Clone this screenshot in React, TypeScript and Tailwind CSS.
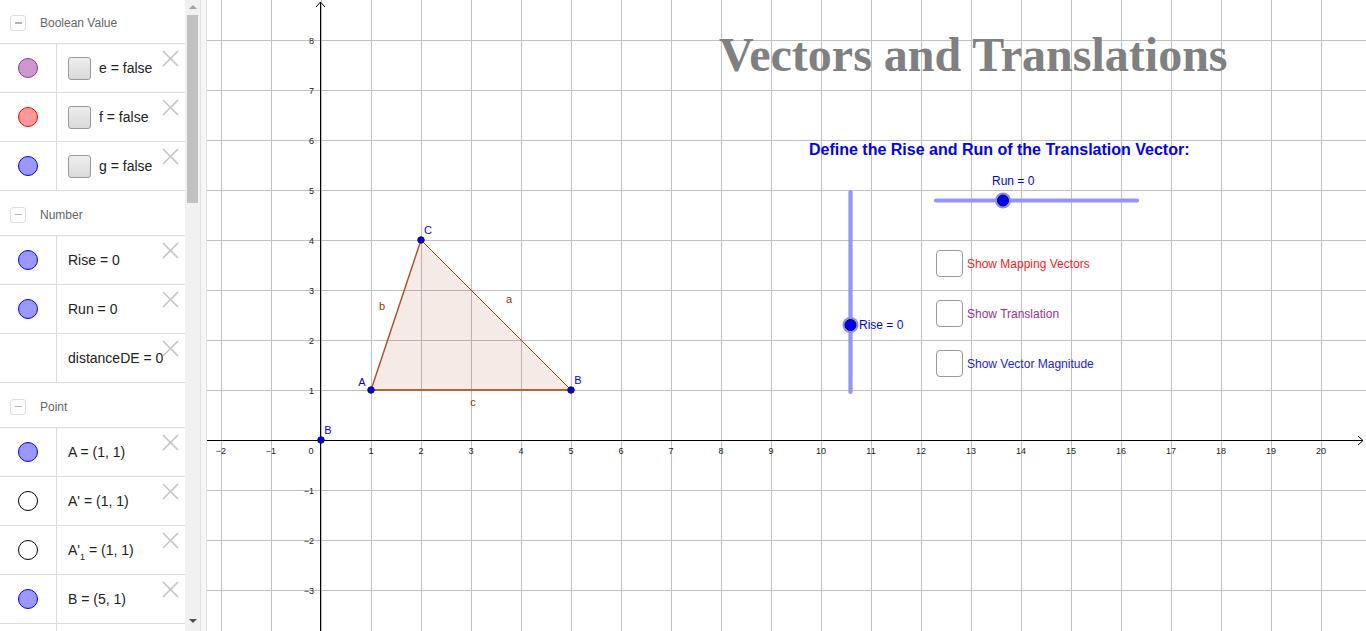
import React from "react";

type Item = {
  color?: { fill: string; stroke: string } | null;
  check?: boolean;
  label: React.ReactNode;
};

const purple = { fill: "#cc99cc", stroke: "#993399" };
const red = { fill: "#ff9999", stroke: "#ff0000" };
const blue = { fill: "#9999ff", stroke: "#0000ff" };
const empty = { fill: "#ffffff", stroke: "#000000" };

const groups: { title: string; first?: boolean; items: Item[] }[] = [
  {
    title: "Boolean Value",
    first: true,
    items: [
      { color: purple, check: true, label: "e = false" },
      { color: red, check: true, label: "f = false" },
      { color: blue, check: true, label: "g = false" },
    ],
  },
  {
    title: "Number",
    items: [
      { color: blue, label: "Rise = 0" },
      { color: blue, label: "Run = 0" },
      { color: null, label: "distanceDE = 0" },
    ],
  },
  {
    title: "Point",
    items: [
      { color: blue, label: "A = (1, 1)" },
      { color: empty, label: "A' = (1, 1)" },
      {
        color: empty,
        label: (
          <>
            A'<sub className="text-[9px] align-[-3px]">1</sub> = (1, 1)
          </>
        ),
      },
      { color: blue, label: "B = (5, 1)" },
    ],
  },
];

function CloseX() {
  return (
    <svg width="17" height="17" viewBox="0 0 17 17" className="absolute top-[6px] right-[6px]">
      <line x1="1" y1="1" x2="16" y2="16" stroke="#c4c4c4" strokeWidth="1.6" />
      <line x1="16" y1="1" x2="1" y2="16" stroke="#c4c4c4" strokeWidth="1.6" />
    </svg>
  );
}

function Row({ item }: { item: Item }) {
  return (
    <div className="relative flex h-[49px] shrink-0 border-b border-[#dcdcdc]">
      <div className="flex w-[57px] shrink-0 items-center border-r border-[#dcdcdc] pl-[18px]">
        {item.color && (
          <div
            className="h-[20px] w-[20px] rounded-full border"
            style={{ background: item.color.fill, borderColor: item.color.stroke }}
          />
        )}
      </div>
      <div className="flex flex-1 items-center pl-[11px] text-[14px] text-[#222] whitespace-nowrap overflow-visible">
        {item.check && (
          <div className="mr-[8px] h-[23px] w-[23px] shrink-0 rounded-[3px] border border-[#9a9a9a] bg-gradient-to-b from-[#eeeeee] to-[#dadada]" />
        )}
        <span>{item.label}</span>
      </div>
      <CloseX />
    </div>
  );
}

function Header({ title, first }: { title: string; first?: boolean }) {
  return (
    <div
      className={
        "flex shrink-0 items-center border-b border-[#dcdcdc] pl-[10px] pt-[3px] " +
        (first ? "h-[44px]" : "h-[45px]")
      }
    >
      <div className="flex h-[16px] w-[16px] items-center justify-center rounded-[3px] border border-[#dedede]">
        <div className="h-[1.5px] w-[7px] bg-[#b5b5b5]" />
      </div>
      <span className="ml-[14px] text-[12px] text-[#666]">{title}</span>
    </div>
  );
}

function Graph() {
  const vx: number[] = [];
  for (let x = 221; x <= 1321; x += 50) vx.push(x);
  const hy: number[] = [];
  for (let y = 40; y <= 590; y += 50) if (y !== 440) hy.push(y);
  const xl: number[] = [];
  for (let k = -2; k <= 20; k++) if (k !== 0) xl.push(k);
  const yl: number[] = [];
  for (let k = -3; k <= 8; k++) if (k !== 0) yl.push(k);
  const fmt = (k: number) => (k < 0 ? "\u2212" + Math.abs(k) : String(k));
  const font = { fontFamily: '"Liberation Sans", Arial, sans-serif' };

  return (
    <svg
      width="1159"
      height="631"
      viewBox="207 0 1159 631"
      className="absolute left-0 top-0"
      style={font}
    >
      <rect x="207" y="0" width="1159" height="631" fill="#ffffff" />
      {vx.map((x) => (
        <line key={"v" + x} x1={x + 0.5} y1="0" x2={x + 0.5} y2="631" stroke="#c0c0c0" strokeWidth="1" />
      ))}
      {hy.map((y) => (
        <line key={"h" + y} x1="207" y1={y + 0.5} x2="1366" y2={y + 0.5} stroke="#c0c0c0" strokeWidth="1" />
      ))}
      {/* axes */}
      <line x1="207" y1="440.5" x2="1363" y2="440.5" stroke="#000" strokeWidth="1" />
      <polyline points="1358,436 1363,440.5 1358,445" fill="none" stroke="#000" strokeWidth="1" />
      <line x1="320.5" y1="2" x2="320.5" y2="631" stroke="#000" strokeWidth="1" />
      <polyline points="316,7 320.5,2 325,7" fill="none" stroke="#000" strokeWidth="1" />

      {xl.map((k) => (
        <text key={"xl" + k} x={321 + 50 * k} y="454" fontSize="9" textAnchor="middle" fill="#222">
          {fmt(k)}
        </text>
      ))}
      <text x="311" y="454" fontSize="9" textAnchor="middle" fill="#222">
        0
      </text>
      {yl.map((k) => (
        <text key={"yl" + k} x="314" y={440 - 50 * k + 3.5} fontSize="9" textAnchor="end" fill="#222">
          {fmt(k)}
        </text>
      ))}

      {/* triangle */}
      <polygon points="371,390 571,390 421,240" fill="#993300" fillOpacity="0.1" stroke="none" />
      <line x1="421" y1="240" x2="571" y2="390" stroke="#a0461a" strokeWidth="1" />
      <line x1="371" y1="390" x2="421" y2="240" stroke="#a8501f" strokeWidth="1.4" />
      <line x1="371" y1="390" x2="571" y2="390" stroke="#b8622f" strokeWidth="2" />
      <text x="509" y="303" fontSize="11" textAnchor="middle" fill="#993300">a</text>
      <text x="382" y="310" fontSize="11" textAnchor="middle" fill="#993300">b</text>
      <text x="473" y="406" fontSize="11" textAnchor="middle" fill="#993300">c</text>

      {[
        [371, 390],
        [571, 390],
        [421, 240],
        [321, 440],
      ].map(([x, y]) => (
        <circle key={x + "-" + y} cx={x} cy={y} r="3.3" fill="#0000ff" stroke="#1a1a1a" strokeWidth="0.9" />
      ))}
      <text x="362" y="386" fontSize="11" textAnchor="middle" fill="#0000ff">A</text>
      <text x="578" y="384" fontSize="11" textAnchor="middle" fill="#0000ff">B</text>
      <text x="428" y="234" fontSize="11" textAnchor="middle" fill="#0000ff">C</text>
      <text x="328" y="434" fontSize="11" textAnchor="middle" fill="#0000ff">B</text>

      {/* Run slider */}
      <line x1="936" y1="200.5" x2="1137" y2="200.5" stroke="#9494ff" strokeWidth="4.2" strokeLinecap="round" />
      <circle cx="1003" cy="200.5" r="8" fill="#8c8cff" />
      <circle cx="1003" cy="200.5" r="5.5" fill="#0000ff" stroke="#111" strokeWidth="1" />
      <text x="992" y="185" fontSize="12" fill="#0000ff">Run = 0</text>

      {/* Rise slider */}
      <line x1="850.5" y1="192" x2="850.5" y2="392" stroke="#9494ff" strokeWidth="4.2" strokeLinecap="round" />
      <circle cx="850.5" cy="325" r="8" fill="#8c8cff" />
      <circle cx="850.5" cy="325" r="5.5" fill="#0000ff" stroke="#111" strokeWidth="1" />
      <text x="859" y="329" fontSize="12" fill="#0000ff">Rise = 0</text>
    </svg>
  );
}

function CheckRow({ top, label, color }: { top: number; label: string; color: string }) {
  return (
    <div className="absolute left-[729px] flex items-center gap-[4px]" style={{ top }}>
      <div className="h-[27px] w-[27px] rounded-[4px] border-[1.5px] border-[#9a9a9a] bg-white" />
      <span className="text-[12px] leading-none whitespace-nowrap" style={{ color }}>
        {label}
      </span>
    </div>
  );
}

export default function App() {
  return (
    <div
      className="flex h-[631px] w-[1366px] overflow-hidden bg-white"
      style={{ fontFamily: '"Liberation Sans", Arial, sans-serif' }}
    >
      {/* Algebra panel */}
      <div className="flex h-full w-[185px] shrink-0 flex-col overflow-hidden bg-white">
        {groups.map((g) => (
          <React.Fragment key={g.title}>
            <Header title={g.title} first={g.first} />
            {g.items.map((it, i) => (
              <Row key={i} item={it} />
            ))}
          </React.Fragment>
        ))}
        <div className="flex h-[49px] shrink-0">
          <div className="w-[57px] border-r border-[#dcdcdc]" />
        </div>
      </div>

      {/* Scrollbar */}
      <div className="relative flex h-full w-[15px] shrink-0 flex-col items-center bg-[#f1f1f1]">
        <div className="mt-[5px] h-0 w-0 border-x-[4px] border-b-[4px] border-x-transparent border-b-[#a3a3a3]" />
        <div className="mt-[6px] h-[188px] w-[11px] bg-[#c1c1c1]" />
        <div className="absolute bottom-[8px] h-0 w-0 border-x-[4px] border-t-[4px] border-x-transparent border-t-[#505050]" />
      </div>

      {/* Divider */}
      <div className="h-full w-[7px] shrink-0 border-x border-[#e2e2e2] bg-[#f6f6f6]" />

      {/* Graphics */}
      <div className="relative h-full flex-1 overflow-hidden">
        <Graph />
        <div
          className="absolute left-[512px] top-[31px] whitespace-nowrap text-[48px] font-bold leading-none text-[#808080]"
          style={{ fontFamily: '"Liberation Serif", "Times New Roman", serif' }}
        >
          Vectors and Translations
        </div>
        <div className="absolute left-[602px] top-[142px] whitespace-nowrap text-[16px] font-bold leading-[16px] text-[#0000ff]">
          Define the Rise and Run of the Translation Vector:
        </div>
        <CheckRow top={250} label="Show Mapping Vectors" color="#ff1a1a" />
        <CheckRow top={300} label="Show Translation" color="#993399" />
        <CheckRow top={350} label="Show Vector Magnitude" color="#1a1aff" />
      </div>
    </div>
  );
}
